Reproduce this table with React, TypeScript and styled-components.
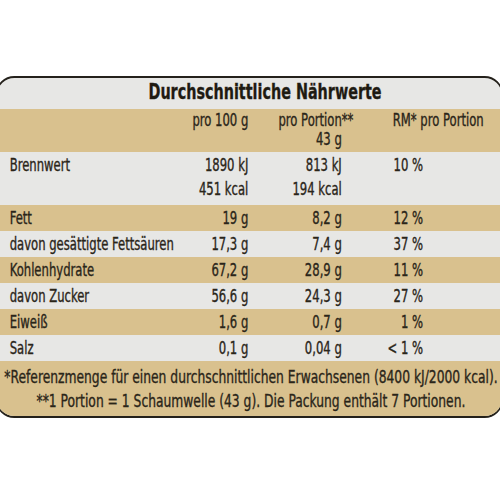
import styled, { createGlobalStyle } from "styled-components";

const GlobalStyle = createGlobalStyle`
    html, body {
        margin: 0;
        padding: 0;
        background: #ffffff;
    }
    body {
        font-family: "DejaVu Sans Condensed", "DejaVu Sans", sans-serif;
        color: #2a2519;
        -webkit-text-stroke: 0.35px #2a2519;
        overflow: hidden;
    }
`;

const TAN = "#d9c18e";
const GREY = "#e7e7e5";
// the printed label uses a tall condensed face; squeeze the whole panel to match
const SQUEEZE = 0.76;

const Panel = styled.div`
    margin-top: 76px;
    margin-left: -4px;
    width: 663px;
    height: 338px;
    border: 2px solid #24211b;
    border-radius: 24px / 18px;
    overflow: hidden;
    display: flex;
    flex-direction: column;
    background: ${GREY};
    transform: scaleX(${SQUEEZE});
    transform-origin: left top;
`;
const Title = styled.div`
    height: 31px;
    padding-left: 41px;
    padding-bottom: 3px;
    box-sizing: border-box;
    display: flex;
    align-items: center;
    justify-content: center;
    font-weight: bold;
    font-size: 21px;
    color: #1e1a12;
`;
const Row = styled.div<{ $tan?: boolean; $h: number }>`
    height: ${p => p.$h}px;
    background: ${p => (p.$tan ? TAN : GREY)};
    display: grid;
    grid-template-columns: 254px 76px 123px 107px 1fr;
    align-items: center;
    font-size: 17px;
`;
const Label = styled.div`
    padding-left: 16px;
    white-space: nowrap;
`;
const Num = styled.div`
    text-align: right;
    white-space: nowrap;
    line-height: 24px;
`;
const HeadCell = styled.div`
    text-align: right;
    white-space: nowrap;
    line-height: 19px;
    align-self: start;
    padding-top: 2px;
`;
const Stars = styled.span`
    display: inline-block;
    width: 0;
    overflow: visible;
`;
const RmHead = styled.div`
    grid-column: 4 / 6;
    padding-left: 67px;
    white-space: nowrap;
    align-self: start;
    line-height: 19px;
    padding-top: 2px;
`;
const StackCell = styled.div`
    display: flex;
    flex-direction: column;
    align-items: flex-end;
    align-self: start;
    padding-top: 1px;
    line-height: 24px;
    white-space: nowrap;
`;
const LabelTop = styled(Label)`
    align-self: start;
    padding-top: 1px;
    line-height: 24px;
`;
const Footnote = styled.div`
    flex: 1;
    background: ${TAN};
    display: flex;
    flex-direction: column;
    align-items: center;
    justify-content: center;
    font-size: 18px;
    line-height: 24px;
    white-space: nowrap;
    padding-left: 4px;
`;

const rows: [string, string, string, string][] = [
    ["Fett", "19 g", "8,2 g", "12 %"],
    ["davon gesättigte Fettsäuren", "17,3 g", "7,4 g", "37 %"],
    ["Kohlenhydrate", "67,2 g", "28,9 g", "11 %"],
    ["davon Zucker", "56,6 g", "24,3 g", "27 %"],
    ["Eiweiß", "1,6 g", "0,7 g", "1 %"],
    ["Salz", "0,1 g", "0,04 g", "< 1 %"],
];

export default function App() {
    return (
        <>
            <GlobalStyle />
            <Panel>
                <Title>Durchschnittliche Nährwerte</Title>
                <Row $tan $h={43}>
                    <div />
                    <HeadCell>pro 100 g</HeadCell>
                    <HeadCell>
                        pro Portion<Stars>**</Stars>
                        <br />
                        43 g
                    </HeadCell>
                    <RmHead>RM* pro Portion</RmHead>
                </Row>
                <Row $h={53}>
                    <LabelTop>Brennwert</LabelTop>
                    <StackCell>
                        <span>1890 kJ</span>
                        <span>451 kcal</span>
                    </StackCell>
                    <StackCell>
                        <span>813 kJ</span>
                        <span>194 kcal</span>
                    </StackCell>
                    <StackCell>
                        <span>10 %</span>
                    </StackCell>
                </Row>
                {rows.map(([name, a, b, c], i) => (
                    <Row key={name} $tan={i % 2 === 0} $h={26}>
                        <Label>{name}</Label>
                        <Num>{a}</Num>
                        <Num>{b}</Num>
                        <Num>{c}</Num>
                    </Row>
                ))}
                <Footnote>
                    <span>*Referenzmenge für einen durchschnittlichen Erwachsenen (8400 kJ/2000 kcal).</span>
                    <span>**1 Portion = 1 Schaumwelle (43 g). Die Packung enthält 7 Portionen.</span>
                </Footnote>
            </Panel>
        </>
    );
}
